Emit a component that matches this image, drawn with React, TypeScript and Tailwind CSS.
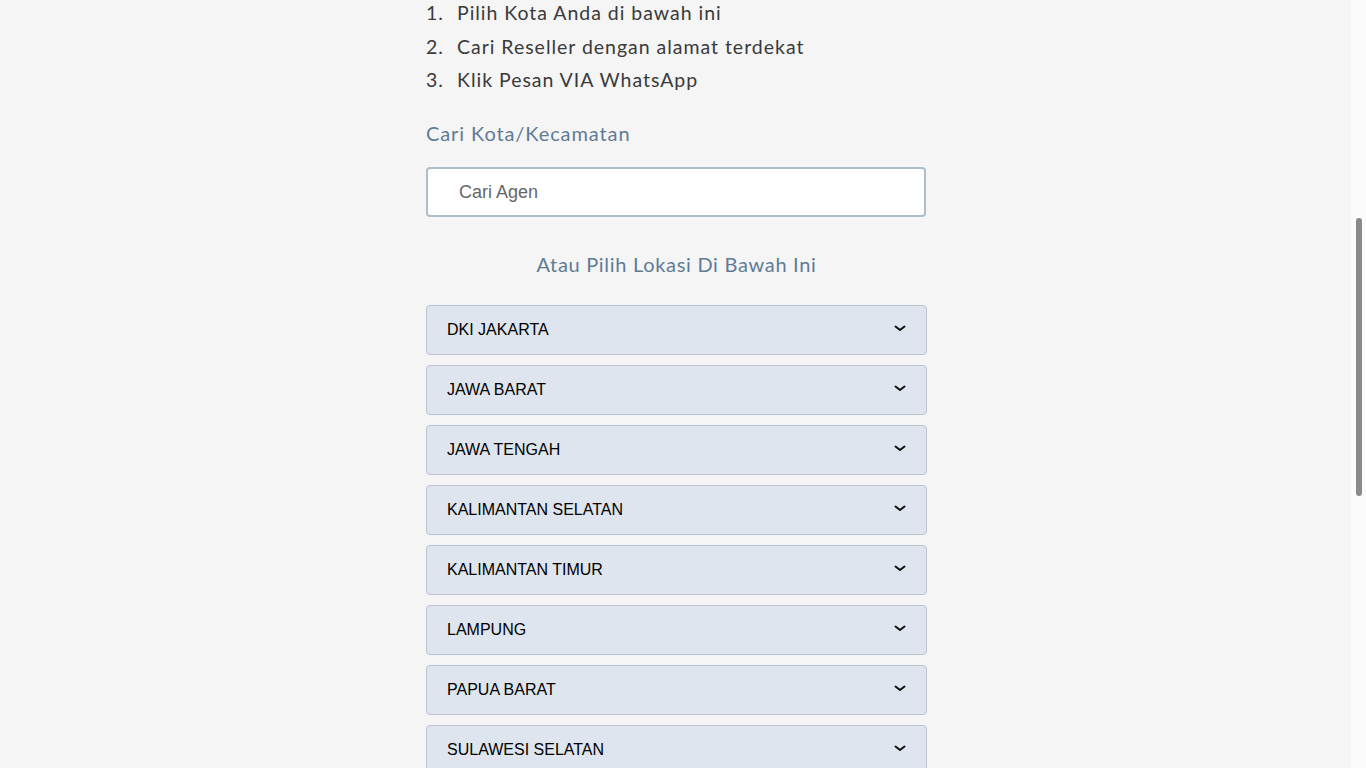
const provinces = [
  "DKI JAKARTA",
  "JAWA BARAT",
  "JAWA TENGAH",
  "KALIMANTAN SELATAN",
  "KALIMANTAN TIMUR",
  "LAMPUNG",
  "PAPUA BARAT",
  "SULAWESI SELATAN",
  "SUMATERA UTARA",
];

const steps = [
  "Pilih Kota Anda di bawah ini",
  "Cari Reseller dengan alamat terdekat",
  "Klik Pesan VIA WhatsApp",
];

function Chevron() {
  return (
    <svg width="12" height="7" viewBox="0 0 12 7" fill="none" className="mb-[3px]">
      <path d="M1.5 1.5 L6 5 L10.5 1.5" stroke="#111" strokeWidth="2" strokeLinecap="round" strokeLinejoin="round" />
    </svg>
  );
}

export default function App() {
  return (
    <div className="flex h-screen overflow-hidden bg-[#f5f5f5]">
      <main className="flex flex-1 justify-center pl-[2px]">
        <div className="-mt-[4px] w-[501px]">
          <ol className="font-['Lato',sans-serif] text-[19.5px] tracking-[0.05em] text-[#3a3a3a]">
            {steps.map((s, i) => (
              <li key={s} className="flex h-[33.5px] items-center">
                <span className="w-[31px]">{i + 1}.</span>
                <span>{s}</span>
              </li>
            ))}
          </ol>

          <p className="mt-[22.5px] font-['Lato',sans-serif] text-[20px] leading-[28px] tracking-[0.045em] text-[#5f7b96]">
            Cari Kota/Kecamatan
          </p>

          <div className="mt-[20px] w-[500px]">
            <input
              autoFocus
              placeholder="Cari Agen"
              className="h-[50px] w-full rounded-[4px] border-2 border-[#aebccb] bg-white pl-[31px] font-['Liberation_Sans',Arial,sans-serif] text-[18px] text-[#333] caret-[#222] outline-none placeholder:text-[#666]"
            />
          </div>

          <p className="mt-[33px] text-center font-['Lato',sans-serif] text-[20px] leading-[28px] tracking-[0.035em] text-[#5f7b96]">
            Atau Pilih Lokasi Di Bawah Ini
          </p>

          <div className="mt-[27px] flex flex-col gap-[10px]">
            {provinces.map((p) => (
              <button
                key={p}
                className="flex h-[50px] w-full items-center justify-between rounded-[4px] border border-[#b9c5d2] bg-[#dee5ee] pl-[20px] pr-[20px] text-left font-['Liberation_Sans',Arial,sans-serif] text-[16px] text-black"
              >
                <span>{p}</span>
                <Chevron />
              </button>
            ))}
          </div>
        </div>
      </main>
      <div className="flex w-[15px] justify-center bg-[#fbfbfb]">
        <div className="mt-[218px] h-[278px] w-[6px] rounded-full bg-[#8a8a8a]" />
      </div>
    </div>
  );
}
